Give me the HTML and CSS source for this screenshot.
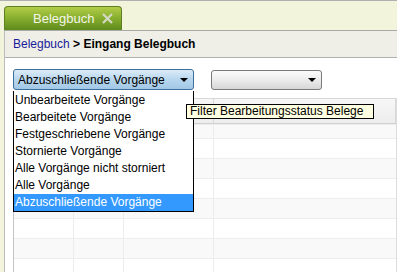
FILE: index.html
```html
<!DOCTYPE html>
<html>
<head>
<meta charset="utf-8">
<link rel="stylesheet" href="styles.css">
</head>
<body>
<div class="topbar">
  <div class="tab">
    <span class="tab-label">Belegbuch</span>
    <svg class="tab-close" width="11" height="11" viewBox="0 0 11 11"><path d="M1 1 L10 10 M10 1 L1 10" stroke="#d3d9c4" stroke-width="2.2" fill="none"/></svg>
  </div>
</div>
<div class="panel">
  <div class="breadcrumb"><span class="crumb-link">Belegbuch</span> <b>&gt; Eingang Belegbuch</b></div>
  <div class="content">
    <div class="filters">
      <div class="select select-open">
        <span>Abzuschließende Vorgänge</span>
        <span class="arrow"></span>
      </div>
      <div class="select select-plain">
        <span></span>
        <span class="arrow"></span>
      </div>
    </div>
    <div class="grid">
      <div class="grid-head">
        <div class="c c1"></div><div class="c c2"></div><div class="c c3"></div><div class="c c4"></div>
      </div>
      <div class="grid-row alt first"><div class="c c1"></div><div class="c c2"></div><div class="c c3"></div><div class="c c4"></div></div>
      <div class="grid-row"><div class="c c1"></div><div class="c c2"></div><div class="c c3"></div><div class="c c4"></div></div>
      <div class="grid-row alt"><div class="c c1"></div><div class="c c2"></div><div class="c c3"></div><div class="c c4"></div></div>
      <div class="grid-row"><div class="c c1"></div><div class="c c2"></div><div class="c c3"></div><div class="c c4"></div></div>
      <div class="grid-row alt"><div class="c c1"></div><div class="c c2"></div><div class="c c3"></div><div class="c c4"></div></div>
      <div class="grid-row"><div class="c c1"></div><div class="c c2"></div><div class="c c3"></div><div class="c c4"></div></div>
      <div class="grid-row alt"><div class="c c1"></div><div class="c c2"></div><div class="c c3"></div><div class="c c4"></div></div>
      <div class="grid-row"><div class="c c1"></div><div class="c c2"></div><div class="c c3"></div><div class="c c4"></div></div>
    </div>
    <ul class="dropdown">
      <li>Unbearbeitete Vorgänge</li>
      <li>Bearbeitete Vorgänge</li>
      <li>Festgeschriebene Vorgänge</li>
      <li>Stornierte Vorgänge</li>
      <li>Alle Vorgänge nicht storniert</li>
      <li>Alle Vorgänge</li>
      <li class="selected">Abzuschließende Vorgänge</li>
    </ul>
    <div class="tooltip">Filter Bearbeitungsstatus Belege</div>
  </div>
</div>
</body>
</html>
```
FILE: styles.css
```css
html, body {
  margin: 0;
  padding: 0;
  height: 100%;
  overflow: hidden;
}
body {
  background: #f2f5dc;
  font-family: "Liberation Sans", Arial, sans-serif;
  font-size: 12px;
  color: #000;
}
.topbar {
  border-top: 1px solid #b0b0b0;
  height: 29px;
  padding-left: 4px;
  display: flex;
  align-items: flex-end;
}
.tab {
  width: 118px;
  height: 24px;
  box-sizing: border-box;
  border: 1px solid #5e7f22;
  border-bottom: none;
  border-radius: 4px 4px 0 0;
  background: linear-gradient(#b2cd48, #86ad2e 50%, #5f8a1c);
  display: flex;
  align-items: center;
  padding-left: 28px;
  gap: 8px;
}
.tab-label {
  color: #f4f6e8;
  font-size: 13px;
}
.tab-close {
  display: block;
}
.panel {
  margin-left: 4px;
  border-left: 1px solid #bcbcbc;
  border-top: 1px solid #a9a9a9;
  background: #fff;
  height: 241px;
  overflow: hidden;
}
.breadcrumb {
  height: 27px;
  box-sizing: border-box;
  background: #efefe7;
  border-bottom: 1px solid #b0b0b0;
  padding-left: 8px;
  line-height: 26px;
}
.crumb-link {
  color: #1a1a9a;
}
.content {
  position: relative;
  padding: 11px 0 0 8px;
}
.filters {
  display: flex;
  align-items: flex-end;
  gap: 17px;
  height: 21px;
}
.select {
  box-sizing: border-box;
  border-radius: 3px;
  display: flex;
  align-items: center;
  justify-content: space-between;
  padding: 0 5px 0 4px;
}
.select-open {
  width: 181px;
  height: 21px;
  border: 1px solid #3c6f9c;
  background: linear-gradient(#dcecf8, #b7d6ee 50%, #a2c8e6);
}
.select-plain {
  width: 111px;
  height: 20px;
  border: 1px solid #7a7a7a;
  background: linear-gradient(#fbfbfb, #ececec 50%, #d6d6d6);
}
.arrow {
  width: 0;
  height: 0;
  border-left: 4px solid transparent;
  border-right: 4px solid transparent;
  border-top: 4px solid #000;
}
.grid {
  margin-top: 8px;
  width: 384px;
  border-left: 1px solid #c4c4c4;
  border-right: 1px solid #dcdcdc;
  box-sizing: border-box;
}
.grid-head {
  display: flex;
  height: 26px;
  box-sizing: border-box;
  border-top: 1px solid #d8d8d8;
  border-bottom: 1px solid #d0d0d0;
  background: linear-gradient(#f7f7f7, #ededed);
}
.grid-head .c {
  border-right: 1px solid #d8d8d8;
}
.grid-row {
  display: flex;
  height: 20px;
  box-sizing: border-box;
  border-top: 1px solid #ededed;
  background: #fff;
}
.grid-row.alt {
  background: #f9f9f9;
}
.grid-row.first {
  height: 14px;
}
.c {
  box-sizing: border-box;
  border-right: 1px solid #ececec;
  height: 100%;
}
.c1 { width: 60px; }
.c2 { width: 50px; }
.c3 { width: 90px; }
.c4 { flex: 1; border-right: none; }
.dropdown {
  position: absolute;
  left: 8px;
  top: 33px;
  width: 181px;
  box-sizing: border-box;
  margin: 0;
  padding: 1px 0 0 0;
  list-style: none;
  background: #fff;
  border: 1px solid #000;
  border-top: none;
}
.dropdown li {
  height: 17px;
  line-height: 17px;
  padding-left: 1px;
}
.dropdown li.selected {
  background: #3399ff;
  color: #fff;
}
.tooltip {
  position: absolute;
  left: 181px;
  top: 46px;
  width: 188px;
  height: 15px;
  box-sizing: border-box;
  border: 1px solid #000;
  background: #ffffe1;
  line-height: 13px;
  padding-left: 3px;
  white-space: nowrap;
}
```
